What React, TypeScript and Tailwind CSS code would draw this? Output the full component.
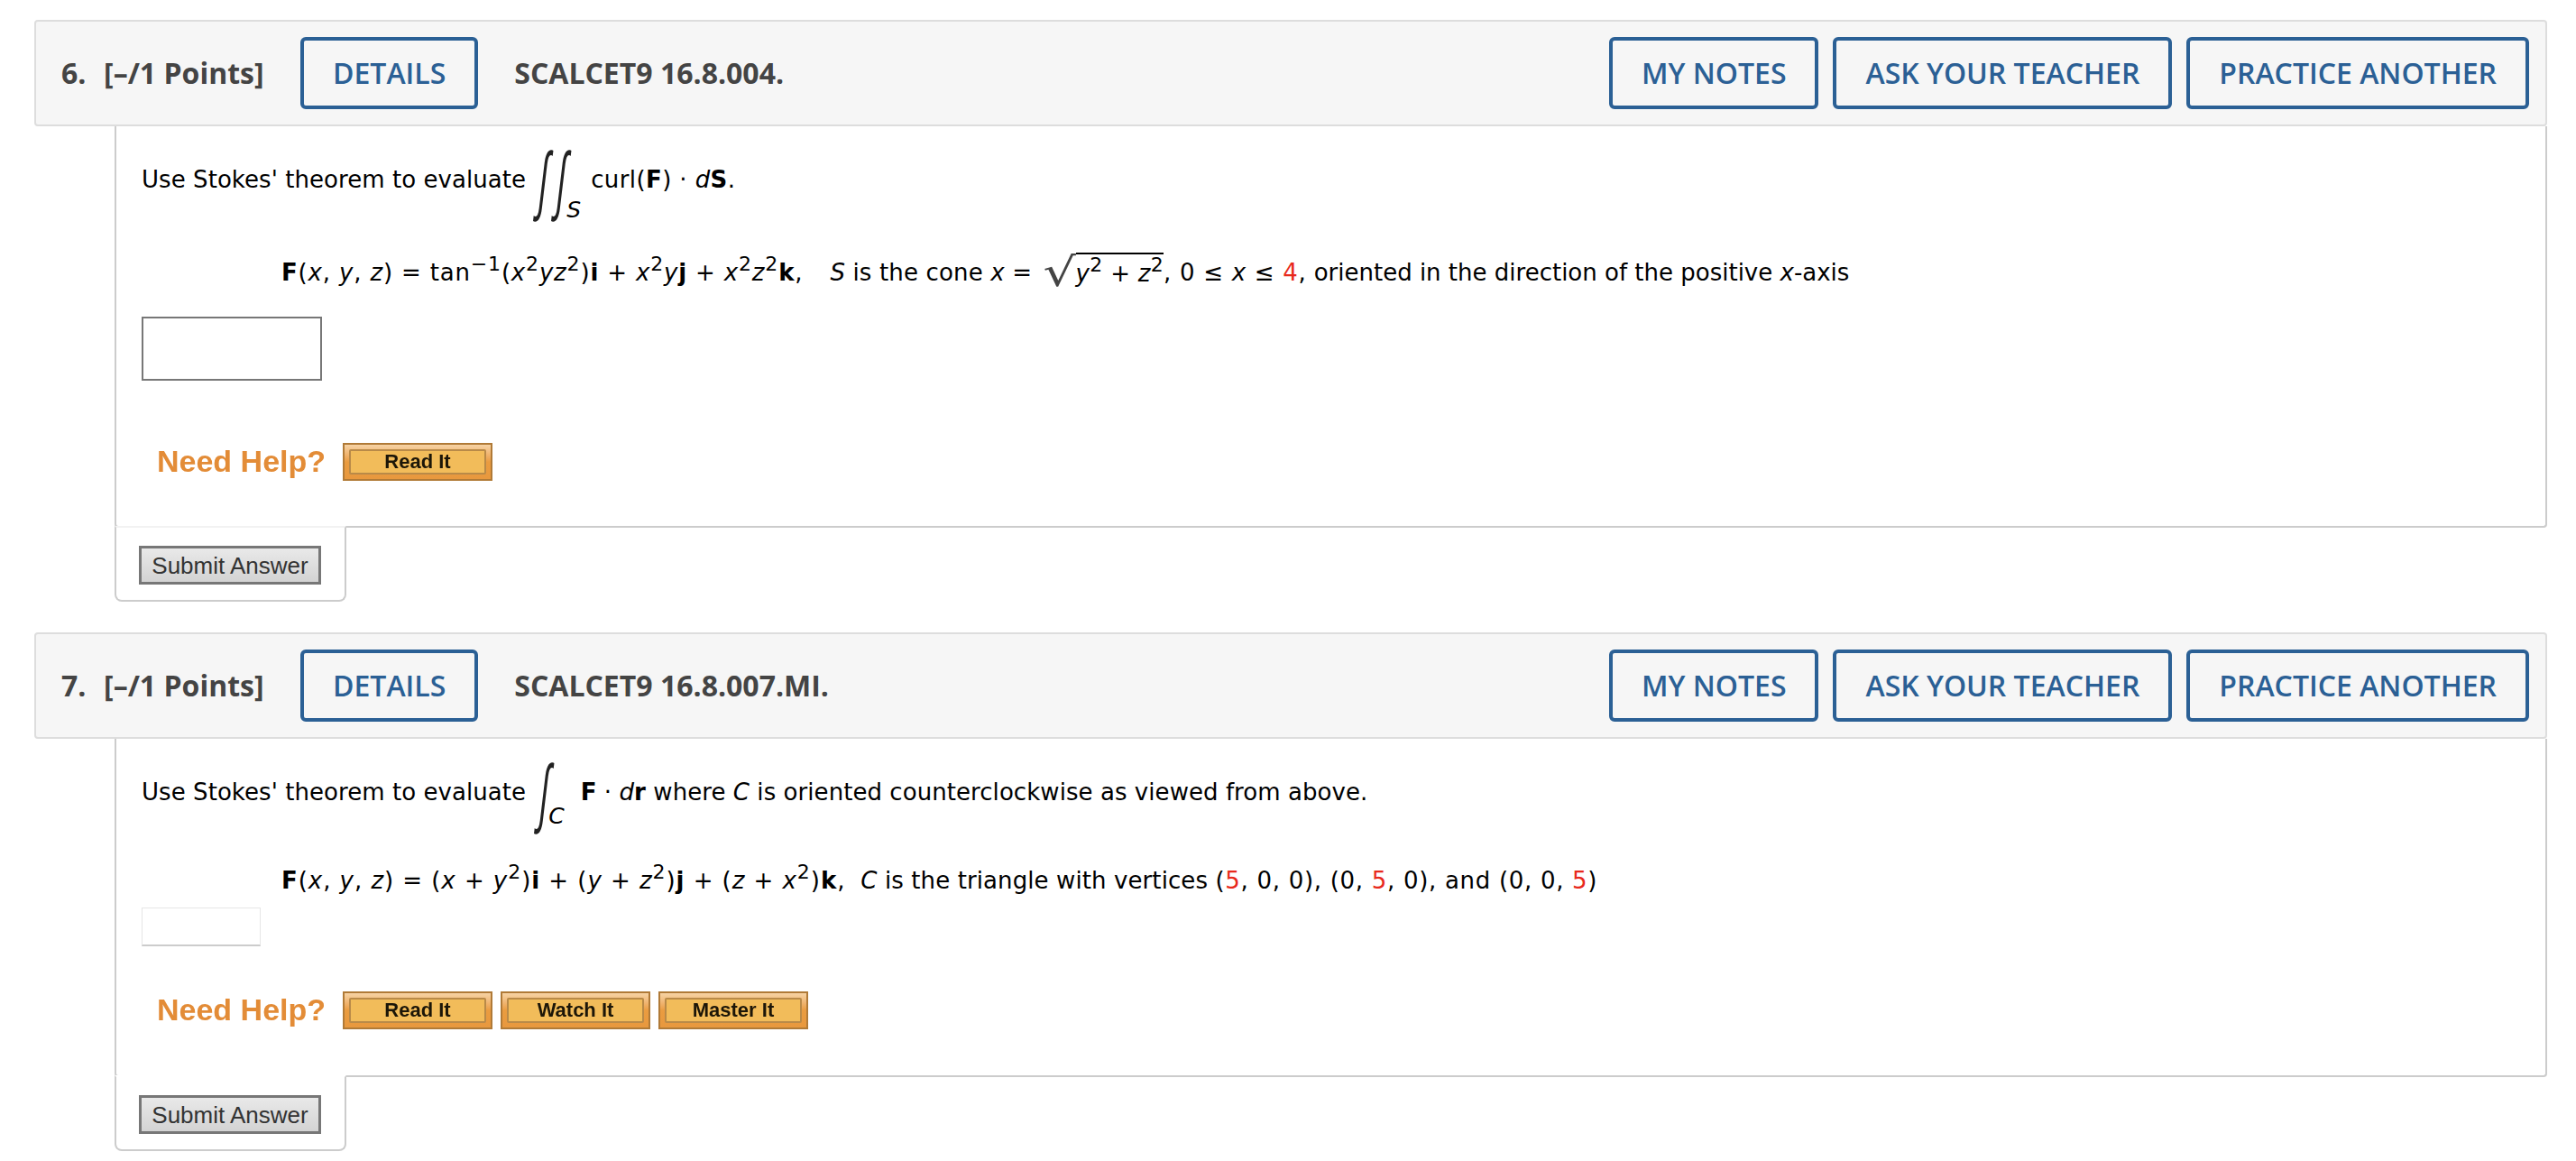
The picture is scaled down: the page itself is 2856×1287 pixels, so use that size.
import React from "react";

const sans = "font-['Open_Sans',sans-serif]";
const mathFont = "font-['DejaVu_Sans',sans-serif]";

const HeaderButton = ({ label }: { label: string }) => (
  <button className="h-[80px] px-[32px] rounded-[6px] border-[4px] border-[#2b6095] text-[#2b6095] text-[32px] font-semibold">
    {label}
  </button>
);

const HelpButton = ({ label, width }: { label: string; width: string }) => (
  <div
    className={`${width} h-[42px] p-[5px] border-2 border-[#b07a37] bg-gradient-to-b from-[#f6d3a4] via-[#ea9c40] to-[#e8983e]`}
  >
    <div className="h-full flex items-center justify-center border-2 border-[#b98a48] bg-[#f2bc5a] rounded-[2px] font-['Liberation_Sans',sans-serif] font-bold text-[22px] text-[#1c1608] blur-[0.4px]">
      {label}
    </div>
  </div>
);

const NeedHelp = ({ buttons }: { buttons: string[] }) => (
  <div className="flex items-center ml-[17px]">
    <span className="w-[206px] font-['Liberation_Sans',sans-serif] font-bold text-[34px] text-[#e38c37] blur-[0.5px]">
      Need Help?
    </span>
    <div className="flex gap-[9px]">
      {buttons.map((b) => (
        <HelpButton key={b} label={b} width="w-[166px]" />
      ))}
    </div>
  </div>
);

const Integral = ({ count, sub, spacing, subSpacing }: { count: number; sub: string; spacing: string; subSpacing: string }) => (
  <span className={`inline-flex items-end h-[88px] ${spacing}`}>
    {Array.from({ length: count }, (_, i) => (
      <span
        key={i}
        className="w-[20px] flex justify-center font-['Liberation_Sans',sans-serif] text-[84px] leading-[88px] text-[#222222] scale-x-[0.42] -skew-x-[16deg]"
      >
        ∫
      </span>
    ))}
    <i className={`text-[25px] leading-[30px] ${subSpacing}`}>{sub}</i>
  </span>
);

const Red = ({ children }: { children: React.ReactNode }) => (
  <span className="text-[#e8291c]">{children}</span>
);

const Sup = ({ children }: { children: React.ReactNode }) => <sup className="text-[22px]">{children}</sup>;

const Question = ({
  number,
  code,
  intro,
  formula,
  input,
  help,
  bodyHeight,
  tabTop,
}: {
  number: string;
  code: string;
  intro: React.ReactNode;
  formula: React.ReactNode;
  input: React.ReactNode;
  help: string[];
  bodyHeight: string;
  tabTop: string;
}) => (
  <section className="ml-[38px] mr-[32px] mb-[34px]">
    <header
      className={`${sans} h-[118px] flex items-center justify-between pl-[28px] pr-[18px] bg-[#f6f6f6] border-2 border-[#dddddd] rounded-[4px]`}
    >
      <div className="flex items-center">
        <span className="w-[267px] text-[32px] font-bold text-[#444444] whitespace-pre -mr-[2px]">
          <span className="mr-[3px]">{number}</span>  [–/1 Points]
        </span>
        <HeaderButton label="DETAILS" />
        <span className="ml-[40px] text-[32px] font-bold text-[#444444]">{code}</span>
      </div>
      <div className="flex gap-[16px]">
        <HeaderButton label="MY NOTES" />
        <HeaderButton label="ASK YOUR TEACHER" />
        <HeaderButton label="PRACTICE ANOTHER" />
      </div>
    </header>
    <div
      className={`${bodyHeight} ${mathFont} ml-[89px] border-2 border-t-0 border-[#cccccc] rounded-b-[4px] pl-[28px] pt-[14px] text-[26px] text-black flex flex-col`}
    >
      {intro}
      {formula}
      {input}
      <NeedHelp buttons={help} />
    </div>
    <div
      className={`${tabTop} ml-[89px] -mt-[2px] relative w-[257px] h-[84px] bg-white border-2 border-[#cccccc] rounded-b-[8px] pl-[25px] pt-[20px]`}
    >
      <button className="w-[202px] h-[43px] border-[3px] border-[#777777] bg-gradient-to-b from-[#e9e9e9] to-[#d3d3d3] font-['Liberation_Sans',sans-serif] text-[26px] leading-none text-[#333333]">
        Submit Answer
      </button>
    </div>
  </section>
);

export default function App() {
  return (
    <div className="w-[2856px] h-[1287px] bg-white pt-[22px] overflow-hidden">
      <Question
        number="6."
        code="SCALCET9 16.8.004."
        bodyHeight="h-[445px]"
        tabTop="border-t-[#f2f2f2]"
        help={["Read It"]}
        intro={
          <p className="h-[90px] flex items-center whitespace-pre tracking-[0.06px]">
            Use Stokes' theorem to evaluate
            <Integral count={2} sub="S" spacing="ml-[10px] mr-[11px]" subSpacing="-ml-[5px] -mb-[5px]" />
            <span className="tracking-[0.4px]">
              curl(<b>F</b>) · <i>d</i>
              <b>S</b>.
            </span>
          </p>
        }
        formula={
          <p className="mt-[33px] ml-[155px] h-[50px] flex items-center whitespace-pre">
            <span className="tracking-[0.83px]">
              <b>F</b>(<i>x</i>, <i>y</i>, <i>z</i>) = tan<Sup>−1</Sup>(<i>x</i>
              <Sup>2</Sup>
              <i>yz</i>
              <Sup>2</Sup>)<b>i</b> + <i>x</i>
              <Sup>2</Sup>
              <i>y</i>
              <b>j</b> + <i>x</i>
              <Sup>2</Sup>
              <i>z</i>
              <Sup>2</Sup>
              <b>k</b>,
            </span>
            <span className="ml-[30px] tracking-[0.15px]">
              <i>S</i> is the cone <i>x</i> ={" "}
            </span>
            <span className="ml-[12px] text-[44px] leading-[44px] text-[#444444] origin-right scale-x-[1.3]">√</span>
            <span className="border-t-2 border-black leading-[42px] tracking-[0.3px]">
              <i>y</i>
              <Sup>2</Sup> + <i>z</i>
              <Sup>2</Sup>
            </span>
            <span className="tracking-[0.7px]">
              , 0 ≤ <i>x</i> ≤ <Red>4</Red>,
            </span>
            <span> oriented in the direction of the positive <i>x</i>-axis</span>
          </p>
        }
        input={
          <div className="mt-[24px] mb-[64px] w-[200px] h-[71px] border-2 border-[#777777] bg-white" />
        }
      />
      <Question
        number="7."
        code="SCALCET9 16.8.007.MI."
        bodyHeight="h-[375px]"
        tabTop="border-t-white"
        help={["Read It", "Watch It", "Master It"]}
        intro={
          <p className="h-[90px] flex items-center whitespace-pre tracking-[0.06px]">
            Use Stokes' theorem to evaluate
            <Integral count={1} sub="C" spacing="ml-[11px] mr-[18px]" subSpacing="-ml-[6px] mb-[2px]" />
            <span>
              <b>F</b> · <i>d</i>
              <b>r</b> where <i>C</i> is oriented counterclockwise as viewed from above.
            </span>
          </p>
        }
        formula={
          <p className="mt-[28px] ml-[155px] h-[50px] flex items-center whitespace-pre">
            <span className="tracking-[0.95px]">
              <b>F</b>(<i>x</i>, <i>y</i>, <i>z</i>) = (<i>x</i> + <i>y</i>
              <Sup>2</Sup>)<b>i</b> + (<i>y</i> + <i>z</i>
              <Sup>2</Sup>)<b>j</b> + (<i>z</i> + <i>x</i>
              <Sup>2</Sup>)<b>k</b>,
            </span>
            <span className="ml-[17px] tracking-[0.1px]">
              <i>C</i> is the triangle with vertices{" "}
            </span>
            <span className="tracking-[0.7px]">
              (<Red>5</Red>, 0, 0), (0, <Red>5</Red>, 0), and (0, 0, <Red>5</Red>)
            </span>
          </p>
        }
        input={
          <div className="mt-[5px] mb-[45px] w-[132px] h-[43px] border border-[#e6e6e6] border-b-2 border-b-[#cccccc] bg-white" />
        }
      />
    </div>
  );
}
